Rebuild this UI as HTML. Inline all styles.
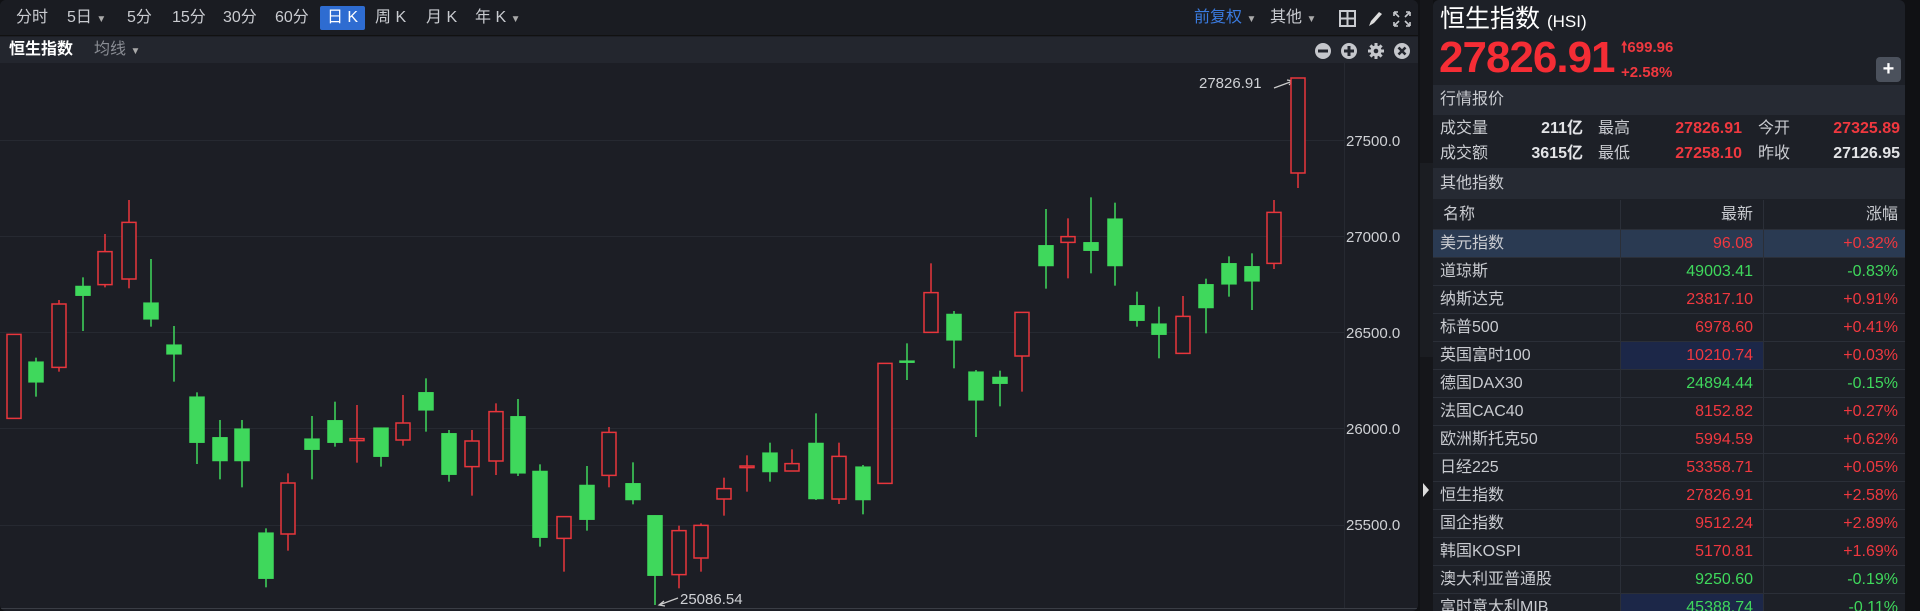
<!DOCTYPE html>
<html><head><meta charset="utf-8">
<style>
*{margin:0;padding:0;box-sizing:border-box}
body{width:1920px;height:611px;background:#101114;font-family:"Liberation Sans","Noto Sans CJK SC",sans-serif;position:relative;overflow:hidden;color:#c9cbd0}
.a{position:absolute;white-space:nowrap}
#chart{position:absolute;left:0;top:0;width:1418px;height:611px;background:#1c1e25;border-radius:6px;overflow:hidden}
#tb{position:absolute;left:0;top:0;width:1418px;height:36px;background:#1a1c22;border-bottom:1px solid #111}
#tb2{position:absolute;left:0;top:37px;width:1418px;height:26px;background:#23262e}
.t{font-size:16px;color:#c9cbd0;top:6px;line-height:24px}
.dd{font-size:10px;color:#aaa}
#panel{position:absolute;left:1433px;top:0;width:472px;height:611px;background:#1d2027;border-radius:6px 6px 0 0;overflow:hidden}
.sec{position:absolute;left:0;width:472px;background:#262a33;font-size:16px;color:#c9cbd0;padding-left:7px}
.row{position:absolute;left:0;width:472px;height:28px;border-bottom:1px solid #2b2f38;font-size:16px}
.row span{position:absolute;top:0;line-height:28px}
.n{left:7px;color:#c9cbd0}
.v{right:152px;text-align:right}
.p{right:7px;text-align:right}
.r{color:#f0383f}.g{color:#3fd85c}
.cs{position:absolute;top:200px;width:1px;height:411px;background:#2b2f38}
.q span{line-height:24px}
</style></head><body>
<div id="chart">
<div id="tb">
<span class="a t" style="left:16px">分时</span>
<span class="a t" style="left:67px">5日 <span class="dd">▼</span></span>
<span class="a t" style="left:127px">5分</span>
<span class="a t" style="left:172px">15分</span>
<span class="a t" style="left:223px">30分</span>
<span class="a t" style="left:275px">60分</span>
<span class="a" style="left:320px;top:6px;width:45px;height:24px;background:#2e6cd1;border-radius:2px;color:#fff;font-size:16px;text-align:center;line-height:24px">日 K</span>
<span class="a t" style="left:375px">周 K</span>
<span class="a t" style="left:426px">月 K</span>
<span class="a t" style="left:475px">年 K <span class="dd">▼</span></span>
<span class="a t" style="left:1194px;color:#3a7be0">前复权 <span class="dd">▼</span></span>
<span class="a t" style="left:1270px">其他 <span class="dd">▼</span></span>
<svg class="a" style="left:1339px;top:10px" width="72" height="18" viewBox="0 0 72 18">
<rect x="1" y="1" width="15" height="15" fill="none" stroke="#c9cbd0" stroke-width="2"/><path d="M8.5 1v15M1 8.5h15" stroke="#c9cbd0" stroke-width="2"/>
<path d="M30 16l2-5 8-9 3 2-8 9z" fill="#ddd"/>
<path d="M55 2h4M55 2v4M71 2h-4M71 2v4M55 16h4M55 16v-4M71 16h-4M71 16v-4M56 3l4 4M70 3l-4 4M56 15l4-4M70 15l-4-4" stroke="#c9cbd0" stroke-width="1.6"/>
</svg>
</div>
<div id="tb2">
<span class="a" style="left:9px;top:1px;font-size:16px;line-height:24px;color:#fff;font-weight:bold">恒生指数</span>
<span class="a" style="left:94px;top:1px;font-size:16px;line-height:24px;color:#8a8d94">均线 <span class="dd">▼</span></span>
<svg class="a" style="left:1314px;top:5px" width="98" height="18" viewBox="0 0 98 18">
<circle cx="9" cy="9" r="8" fill="#c5c7cc"/><rect x="4" y="7.5" width="10" height="3" fill="#23262e"/>
<circle cx="35" cy="9" r="8" fill="#c5c7cc"/><rect x="30" y="7.5" width="10" height="3" fill="#23262e"/><rect x="33.5" y="4" width="3" height="10" fill="#23262e"/>
<g transform="translate(62,9)" fill="#c5c7cc"><circle r="5.5"/><g stroke="#c5c7cc" stroke-width="3"><path d="M0-8V8M-8 0H8M-5.6-5.6L5.6 5.6M5.6-5.6L-5.6 5.6"/></g><circle r="2.3" fill="#23262e"/></g>
<circle cx="88" cy="9" r="8" fill="#c5c7cc"/><path d="M84.5 5.5l7 7M91.5 5.5l-7 7" stroke="#23262e" stroke-width="2.6"/>
</svg>
</div>
<svg class="a" style="left:0;top:0" width="1418" height="611">
<g stroke="#262931" stroke-width="1">
<line x1="0" y1="140.5" x2="1344" y2="140.5"/><line x1="0" y1="236.5" x2="1344" y2="236.5"/><line x1="0" y1="332.5" x2="1344" y2="332.5"/><line x1="0" y1="428.5" x2="1344" y2="428.5"/><line x1="0" y1="525.5" x2="1344" y2="525.5"/>
<line x1="1344.5" y1="63" x2="1344.5" y2="608"/>
</g>
<line x1="0" y1="608.5" x2="1418" y2="608.5" stroke="#3a3d45"/>
<g font-size="15" fill="#cfd1d5" font-family="Liberation Sans,sans-serif">
<text x="1346" y="146">27500.0</text><text x="1346" y="242">27000.0</text><text x="1346" y="338">26500.0</text><text x="1346" y="434">26000.0</text><text x="1346" y="530">25500.0</text>
<text x="1199" y="88">27826.91</text><text x="680" y="604">25086.54</text>
</g>
<path d="M1274 88l19-7M1287 80l6 1-4 4" stroke="#ccc" stroke-width="1.2" fill="none"/>
<path d="M678 598l-19 7M664 601l-5 4 6 1" stroke="#ccc" stroke-width="1.2" fill="none"/>
<g transform="translate(0,180) scale(1,0.33333)" stroke-width="1.5">
<g stroke="#3fd85c" fill="#3fd85c">
<line x1="36" y1="533" x2="36" y2="650" vector-effect="non-scaling-stroke"/><rect x="29" y="545" width="14" height="62"/>
<line x1="83" y1="292" x2="83" y2="453" vector-effect="non-scaling-stroke"/><rect x="76" y="318" width="14" height="29"/>
<line x1="151" y1="237" x2="151" y2="440" vector-effect="non-scaling-stroke"/><rect x="144" y="368" width="14" height="50"/>
<line x1="174" y1="438" x2="174" y2="605" vector-effect="non-scaling-stroke"/><rect x="167" y="494" width="14" height="29"/>
<line x1="197" y1="637" x2="197" y2="852" vector-effect="non-scaling-stroke"/><rect x="190" y="650" width="14" height="138"/>
<line x1="220" y1="720" x2="220" y2="898" vector-effect="non-scaling-stroke"/><rect x="213" y="772" width="14" height="71"/>
<line x1="242" y1="720" x2="242" y2="922" vector-effect="non-scaling-stroke"/><rect x="235" y="746" width="14" height="97"/>
<line x1="266" y1="1045" x2="266" y2="1222" vector-effect="non-scaling-stroke"/><rect x="259" y="1058" width="14" height="138"/>
<line x1="312" y1="708" x2="312" y2="898" vector-effect="non-scaling-stroke"/><rect x="305" y="776" width="14" height="33"/>
<line x1="335" y1="665" x2="335" y2="800" vector-effect="non-scaling-stroke"/><rect x="328" y="721" width="14" height="67"/>
<line x1="381" y1="743" x2="381" y2="860" vector-effect="non-scaling-stroke"/><rect x="374" y="743" width="14" height="87"/>
<line x1="426" y1="595" x2="426" y2="755" vector-effect="non-scaling-stroke"/><rect x="419" y="637" width="14" height="54"/>
<line x1="449" y1="750" x2="449" y2="905" vector-effect="non-scaling-stroke"/><rect x="442" y="760" width="14" height="124"/>
<line x1="518" y1="657" x2="518" y2="888" vector-effect="non-scaling-stroke"/><rect x="511" y="709" width="14" height="171"/>
<line x1="540" y1="853" x2="540" y2="1100" vector-effect="non-scaling-stroke"/><rect x="533" y="873" width="14" height="200"/>
<line x1="587" y1="858" x2="587" y2="1052" vector-effect="non-scaling-stroke"/><rect x="580" y="915" width="14" height="104"/>
<line x1="633" y1="847" x2="633" y2="973" vector-effect="non-scaling-stroke"/><rect x="626" y="910" width="14" height="50"/>
<line x1="655" y1="1006" x2="655" y2="1275" vector-effect="non-scaling-stroke"/><rect x="648" y="1006" width="14" height="181"/>
<line x1="770" y1="788" x2="770" y2="905" vector-effect="non-scaling-stroke"/><rect x="763" y="818" width="14" height="58"/>
<line x1="816" y1="700" x2="816" y2="960" vector-effect="non-scaling-stroke"/><rect x="809" y="789" width="14" height="168"/>
<line x1="863" y1="855" x2="863" y2="1003" vector-effect="non-scaling-stroke"/><rect x="856" y="860" width="14" height="100"/>
<line x1="907" y1="490" x2="907" y2="600" vector-effect="non-scaling-stroke"/><rect x="900" y="542" width="14" height="6"/>
<line x1="954" y1="393" x2="954" y2="565" vector-effect="non-scaling-stroke"/><rect x="947" y="402" width="14" height="79"/>
<line x1="976" y1="570" x2="976" y2="771" vector-effect="non-scaling-stroke"/><rect x="969" y="575" width="14" height="86"/>
<line x1="1000" y1="572" x2="1000" y2="679" vector-effect="non-scaling-stroke"/><rect x="993" y="591" width="14" height="20"/>
<line x1="1046" y1="87" x2="1046" y2="326" vector-effect="non-scaling-stroke"/><rect x="1039" y="196" width="14" height="62"/>
<line x1="1091" y1="52" x2="1091" y2="280" vector-effect="non-scaling-stroke"/><rect x="1084" y="187" width="14" height="25"/>
<line x1="1115" y1="68" x2="1115" y2="317" vector-effect="non-scaling-stroke"/><rect x="1108" y="116" width="14" height="142"/>
<line x1="1137" y1="335" x2="1137" y2="440" vector-effect="non-scaling-stroke"/><rect x="1130" y="376" width="14" height="46"/>
<line x1="1159" y1="380" x2="1159" y2="535" vector-effect="non-scaling-stroke"/><rect x="1152" y="431" width="14" height="33"/>
<line x1="1206" y1="296" x2="1206" y2="460" vector-effect="non-scaling-stroke"/><rect x="1199" y="313" width="14" height="71"/>
<line x1="1229" y1="229" x2="1229" y2="350" vector-effect="non-scaling-stroke"/><rect x="1222" y="250" width="14" height="63"/>
<line x1="1252" y1="220" x2="1252" y2="390" vector-effect="non-scaling-stroke"/><rect x="1245" y="259" width="14" height="45"/>
</g>
<g stroke="#e8363c" fill="#1c1e25">
<line x1="14" y1="463" x2="14" y2="715" vector-effect="non-scaling-stroke"/><rect x="7" y="463" width="14" height="252" vector-effect="non-scaling-stroke"/>
<line x1="59" y1="360" x2="59" y2="575" vector-effect="non-scaling-stroke"/><rect x="52" y="372" width="14" height="190" vector-effect="non-scaling-stroke"/>
<line x1="105" y1="162" x2="105" y2="322" vector-effect="non-scaling-stroke"/><rect x="98" y="215" width="14" height="99" vector-effect="non-scaling-stroke"/>
<line x1="129" y1="60" x2="129" y2="325" vector-effect="non-scaling-stroke"/><rect x="122" y="127" width="14" height="170" vector-effect="non-scaling-stroke"/>
<line x1="288" y1="880" x2="288" y2="1112" vector-effect="non-scaling-stroke"/><rect x="281" y="909" width="14" height="153" vector-effect="non-scaling-stroke"/>
<line x1="357" y1="675" x2="357" y2="848" vector-effect="non-scaling-stroke"/><rect x="350" y="776" width="14" height="6" vector-effect="non-scaling-stroke"/>
<line x1="403" y1="645" x2="403" y2="797" vector-effect="non-scaling-stroke"/><rect x="396" y="729" width="14" height="51" vector-effect="non-scaling-stroke"/>
<line x1="472" y1="750" x2="472" y2="947" vector-effect="non-scaling-stroke"/><rect x="465" y="783" width="14" height="77" vector-effect="non-scaling-stroke"/>
<line x1="496" y1="670" x2="496" y2="885" vector-effect="non-scaling-stroke"/><rect x="489" y="695" width="14" height="148" vector-effect="non-scaling-stroke"/>
<line x1="564" y1="1010" x2="564" y2="1175" vector-effect="non-scaling-stroke"/><rect x="557" y="1010" width="14" height="65" vector-effect="non-scaling-stroke"/>
<line x1="609" y1="741" x2="609" y2="922" vector-effect="non-scaling-stroke"/><rect x="602" y="757" width="14" height="129" vector-effect="non-scaling-stroke"/>
<line x1="679" y1="1037" x2="679" y2="1225" vector-effect="non-scaling-stroke"/><rect x="672" y="1052" width="14" height="132" vector-effect="non-scaling-stroke"/>
<line x1="701" y1="1030" x2="701" y2="1175" vector-effect="non-scaling-stroke"/><rect x="694" y="1036" width="14" height="98" vector-effect="non-scaling-stroke"/>
<line x1="724" y1="893" x2="724" y2="1007" vector-effect="non-scaling-stroke"/><rect x="717" y="926" width="14" height="31" vector-effect="non-scaling-stroke"/>
<line x1="747" y1="826" x2="747" y2="935" vector-effect="non-scaling-stroke"/><rect x="740" y="858" width="14" height="5" vector-effect="non-scaling-stroke"/>
<line x1="792" y1="808" x2="792" y2="873" vector-effect="non-scaling-stroke"/><rect x="785" y="851" width="14" height="22" vector-effect="non-scaling-stroke"/>
<line x1="839" y1="788" x2="839" y2="972" vector-effect="non-scaling-stroke"/><rect x="832" y="829" width="14" height="128" vector-effect="non-scaling-stroke"/>
<line x1="885" y1="550" x2="885" y2="910" vector-effect="non-scaling-stroke"/><rect x="878" y="550" width="14" height="360" vector-effect="non-scaling-stroke"/>
<line x1="931" y1="250" x2="931" y2="457" vector-effect="non-scaling-stroke"/><rect x="924" y="338" width="14" height="119" vector-effect="non-scaling-stroke"/>
<line x1="1022" y1="397" x2="1022" y2="635" vector-effect="non-scaling-stroke"/><rect x="1015" y="397" width="14" height="131" vector-effect="non-scaling-stroke"/>
<line x1="1068" y1="115" x2="1068" y2="295" vector-effect="non-scaling-stroke"/><rect x="1061" y="170" width="14" height="17" vector-effect="non-scaling-stroke"/>
<line x1="1183" y1="348" x2="1183" y2="520" vector-effect="non-scaling-stroke"/><rect x="1176" y="409" width="14" height="111" vector-effect="non-scaling-stroke"/>
<line x1="1274" y1="60" x2="1274" y2="267" vector-effect="non-scaling-stroke"/><rect x="1267" y="97" width="14" height="153" vector-effect="non-scaling-stroke"/>
<line x1="1298" y1="-306" x2="1298" y2="24" vector-effect="non-scaling-stroke"/><rect x="1291" y="-306" width="14" height="285" vector-effect="non-scaling-stroke"/>
</g>
</g>
</svg>
</div>
<div class="a" style="left:1420px;top:0;width:13px;height:611px;background:#15161a"></div>
<div class="a" style="left:1420px;top:163px;width:13px;height:194px;background:#1b1d22"></div>
<svg class="a" style="left:1421px;top:482px" width="10" height="16"><path d="M2 1l6 7-6 7z" fill="#ddd"/></svg>
<div id="panel">
<span class="a" style="left:7px;top:3px;font-size:25px;line-height:32px;color:#fff">恒生指数 <span style="font-size:17px">(HSI)</span></span>
<span class="a" style="left:6px;top:36px;font-size:44px;line-height:44px;font-weight:bold;color:#f52d35;letter-spacing:-1px">27826.91</span>
<span class="a" style="left:188px;top:38px;font-size:15px;line-height:20px;font-weight:bold;color:#f0383f">🠕699.96</span>
<span class="a" style="left:188px;top:63px;font-size:15px;line-height:20px;font-weight:bold;color:#f0383f">+2.58%</span>
<div class="a" style="left:443px;top:57px;width:25px;height:25px;background:#4b515c;border-radius:4px;color:#fff;font-size:20px;font-weight:bold;text-align:center;line-height:24px">+</div>
<div class="sec" style="top:85px;height:30px;line-height:30px">行情报价</div>
<div class="a q" style="left:0;top:115px;width:472px;height:53px;font-size:16px">
<span class="a" style="left:7px;top:2px">成交量</span><span class="a" style="right:322px;top:2px;color:#e3e4e7;font-weight:bold">211亿</span>
<span class="a" style="left:165px;top:2px">最高</span><span class="a r" style="right:163px;top:2px;font-weight:bold">27826.91</span>
<span class="a" style="left:325px;top:2px">今开</span><span class="a r" style="right:5px;top:2px;font-weight:bold">27325.89</span>
<span class="a" style="left:7px;top:27px">成交额</span><span class="a" style="right:322px;top:27px;color:#e3e4e7;font-weight:bold">3615亿</span>
<span class="a" style="left:165px;top:27px">最低</span><span class="a r" style="right:163px;top:27px;font-weight:bold">27258.10</span>
<span class="a" style="left:325px;top:27px">昨收</span><span class="a" style="right:5px;top:27px;color:#e3e4e7;font-weight:bold">27126.95</span>
</div>
<div class="sec" style="top:168px;height:31px;line-height:31px">其他指数</div>
<div class="row" style="top:200px;height:30px"><span class="n" style="left:10px;line-height:30px">名称</span><span class="v" style="color:#c9cbd0;line-height:30px">最新</span><span class="p" style="color:#c9cbd0;line-height:30px">涨幅</span></div>
<div class="row" style="top:230px;background:#2a3a52"><span class="n">美元指数</span><span class="v r">96.08</span><span class="p r">+0.32%</span></div>
<div class="row" style="top:258px"><span class="n">道琼斯</span><span class="v g">49003.41</span><span class="p g">-0.83%</span></div>
<div class="row" style="top:286px"><span class="n">纳斯达克</span><span class="v r">23817.10</span><span class="p r">+0.91%</span></div>
<div class="row" style="top:314px"><span class="n">标普500</span><span class="v r">6978.60</span><span class="p r">+0.41%</span></div>
<div class="row" style="top:342px"><div class="a" style="left:187px;top:0;width:143px;height:27px;background:#1c2748"></div><span class="n">英国富时100</span><span class="v r">10210.74</span><span class="p r">+0.03%</span></div>
<div class="row" style="top:370px"><span class="n">德国DAX30</span><span class="v g">24894.44</span><span class="p g">-0.15%</span></div>
<div class="row" style="top:398px"><span class="n">法国CAC40</span><span class="v r">8152.82</span><span class="p r">+0.27%</span></div>
<div class="row" style="top:426px"><span class="n">欧洲斯托克50</span><span class="v r">5994.59</span><span class="p r">+0.62%</span></div>
<div class="row" style="top:454px"><span class="n">日经225</span><span class="v r">53358.71</span><span class="p r">+0.05%</span></div>
<div class="row" style="top:482px"><span class="n">恒生指数</span><span class="v r">27826.91</span><span class="p r">+2.58%</span></div>
<div class="row" style="top:510px"><span class="n">国企指数</span><span class="v r">9512.24</span><span class="p r">+2.89%</span></div>
<div class="row" style="top:538px"><span class="n">韩国KOSPI</span><span class="v r">5170.81</span><span class="p r">+1.69%</span></div>
<div class="row" style="top:566px"><span class="n">澳大利亚普通股</span><span class="v g">9250.60</span><span class="p g">-0.19%</span></div>
<div class="row" style="top:594px"><div class="a" style="left:187px;top:0;width:143px;height:27px;background:#1c2748"></div><span class="n">富时意大利MIB</span><span class="v g">45388.74</span><span class="p g">-0.11%</span></div>
<div class="cs" style="left:187px"></div><div class="cs" style="left:330px"></div>
</div>
</body></html>
